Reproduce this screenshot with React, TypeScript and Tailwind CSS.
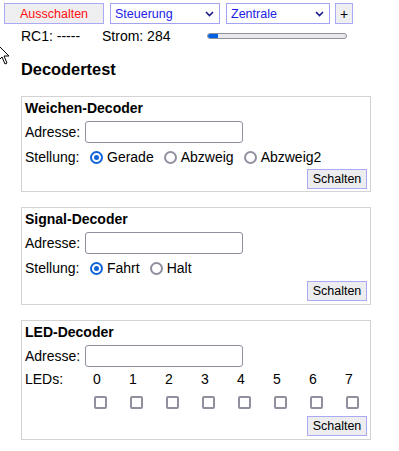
import { useState } from "react";

const font = { fontFamily: '"Liberation Sans", Arial, sans-serif' };

const Chevron = () => (
  <svg className="pointer-events-none absolute right-[6px] top-[8px]" width="9" height="6" viewBox="0 0 9 6">
    <path d="M1 1 L4.5 4.5 L8 1" fill="none" stroke="#1c1c8c" strokeWidth="1.6" />
  </svg>
);

const Select = ({ value, width }: { value: string; width: string }) => (
  <div className={`relative h-[21px] ${width}`}>
    <select
      defaultValue={value}
      className="h-full w-full appearance-none border border-[#a3a3f4] bg-white pl-[4px] text-[12.5px] text-[#2222e6] outline-none"
    >
      <option>{value}</option>
    </select>
    <Chevron />
  </div>
);

const Radio = ({ checked, label }: { checked?: boolean; label: string }) => (
  <label className="flex items-center gap-[4px]">
    {checked ? (
      <span className="flex h-[13px] w-[13px] items-center justify-center rounded-full border-2 border-[#1264d8] bg-white">
        <span className="h-[5px] w-[5px] rounded-full bg-[#1264d8]" />
      </span>
    ) : (
      <span className="h-[13px] w-[13px] rounded-full border-2 border-[#8f8f9d] bg-white" />
    )}
    <span>{label}</span>
  </label>
);

const SchaltenButton = () => (
  <div className="flex justify-end">
    <button className="h-[20px] w-[60px] border border-[#a9a9f4] bg-[#ededf0] text-[12.5px] text-black">Schalten</button>
  </div>
);

const AddressRow = () => (
  <div className="mt-[5px] flex items-center">
    <span className="w-[60px]">Adresse:</span>
    <input className="h-[22px] w-[158px] rounded-[3px] border border-[#8f8f9d] bg-white px-1 outline-none" />
  </div>
);

const Panel = ({ title, children, extra }: { title: string; children: React.ReactNode; extra?: string }) => (
  <div className={`ml-[21px] w-[350px] border border-[#d3d3d3] px-[3px] pt-[3px] ${extra ?? "pb-[2px]"}`}>
    <div className="text-[14px] leading-[16px] font-bold">{title}</div>
    {children}
  </div>
);

export default function App() {
  const [leds] = useState([0, 1, 2, 3, 4, 5, 6, 7]);

  return (
    <div style={font} className="relative h-[451px] w-[399px] overflow-hidden bg-white text-[14px] leading-[16px] text-black">
      <div className="flex items-start pl-[4px] pt-[3px]">
        <button className="h-[21px] w-[100px] border border-[#a9a9f4] bg-[#efeff1] text-[12.5px] text-[#ff1010]">Ausschalten</button>
        <div className="ml-[6px]">
          <Select value="Steuerung" width="w-[110px]" />
        </div>
        <div className="ml-[6px]">
          <Select value="Zentrale" width="w-[104px]" />
        </div>
        <button className="ml-[5px] h-[21px] w-[18px] border border-[#a9a9f4] bg-[#efeff1] text-[14px] leading-[14px] text-black">+</button>
      </div>

      <div className="mt-[4px] flex h-[16px] items-center pl-[21px]">
        <span className="w-[81px]">RC1: -----</span>
        <span className="w-[105px]">Strom: 284</span>
        <div className="h-[6px] w-[140px] overflow-hidden rounded-full border border-[#8f8f9d] bg-[#e9e9ed]">
          <div className="h-full bg-[#0060df]" style={{ width: "7%" }} />
        </div>
      </div>

      <h3 className="mt-[16px] pl-[21px] text-[16.4px] leading-[19px] font-bold">Decodertest</h3>

      <div className="mt-[17px] flex flex-col gap-[15px]">
        <Panel title="Weichen-Decoder">
          <AddressRow />
          <div className="mt-[6px] flex h-[16px] items-center">
            <span className="w-[60px]">Stellung:</span>
            <div className="ml-[5px] flex items-center gap-[10px]">
              <Radio checked label="Gerade" />
              <Radio label="Abzweig" />
              <Radio label="Abzweig2" />
            </div>
          </div>
          <div className="mt-[4px]">
            <SchaltenButton />
          </div>
        </Panel>

        <Panel title="Signal-Decoder" extra="pb-[3px]">
          <AddressRow />
          <div className="mt-[6px] flex h-[16px] items-center">
            <span className="w-[60px]">Stellung:</span>
            <div className="ml-[5px] flex items-center gap-[10px]">
              <Radio checked label="Fahrt" />
              <Radio label="Halt" />
            </div>
          </div>
          <div className="mt-[5px]">
            <SchaltenButton />
          </div>
        </Panel>

        <Panel title="LED-Decoder" extra="pb-[3px]">
          <AddressRow />
          <div className="mt-[4px] flex h-[16px] items-center">
            <span className="w-[60px]">LEDs:</span>
            {leds.map((n) => (
              <span key={n} className="w-[36px] shrink-0 text-center">
                {n}
              </span>
            ))}
          </div>
          <div className="mt-[9px] flex h-[13px] items-center pl-[57px]">
            {leds.map((n) => (
              <span key={n} className="flex w-[36px] shrink-0 justify-center">
                <span className="h-[13px] w-[13px] rounded-[2px] border-2 border-[#8f8f9d] bg-white" />
              </span>
            ))}
          </div>
          <div className="mt-[7px]">
            <SchaltenButton />
          </div>
        </Panel>
      </div>

      <svg className="absolute left-[-3px] top-[44px]" width="14" height="22" viewBox="0 0 14 22">
        <path d="M1 1 L1 17 L5 13 L8 20 L10 19 L7 12 L12 12 Z" fill="#fff" stroke="#000" strokeWidth="1" />
      </svg>
    </div>
  );
}
